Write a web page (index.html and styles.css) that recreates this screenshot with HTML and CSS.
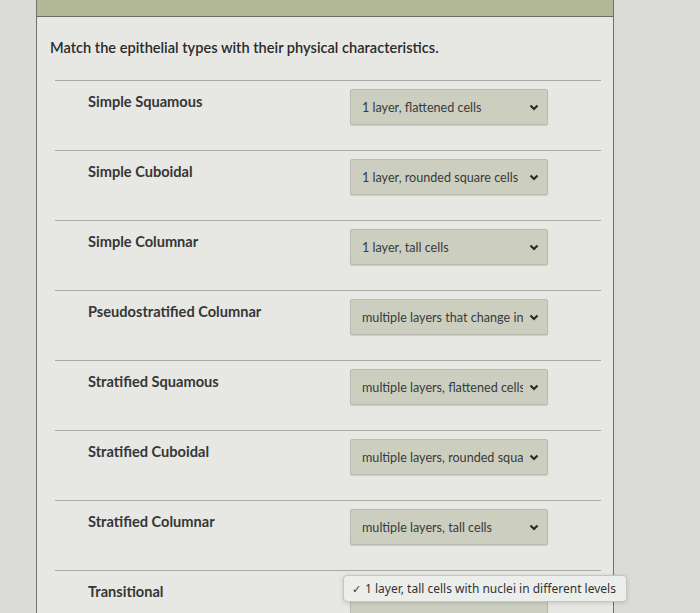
FILE: index.html
```html
<!DOCTYPE html>
<html lang="en">
<head>
    <meta charset="UTF-8">
    <meta name="viewport" content="width=device-width, initial-scale=1.0">
    <title>Matching Question</title>
    <link rel="stylesheet" href="styles.css">
</head>
<body>
    <div class="card">
        <div class="card-top"></div>
        <p class="prompt">Match the epithelial types with their physical characteristics.</p>

        <div class="rows">
            <div class="row">
                <div class="term">Simple Squamous</div>
                <div class="choice">
                    <span class="choice-text">1 layer, flattened cells</span>
                    <svg class="chevron" viewBox="0 0 10 7"><polyline points="1.5,1.5 5,5 8.5,1.5"/></svg>
                </div>
            </div>
            <div class="row">
                <div class="term">Simple Cuboidal</div>
                <div class="choice">
                    <span class="choice-text">1 layer, rounded square cells</span>
                    <svg class="chevron" viewBox="0 0 10 7"><polyline points="1.5,1.5 5,5 8.5,1.5"/></svg>
                </div>
            </div>
            <div class="row">
                <div class="term">Simple Columnar</div>
                <div class="choice">
                    <span class="choice-text">1 layer, tall cells</span>
                    <svg class="chevron" viewBox="0 0 10 7"><polyline points="1.5,1.5 5,5 8.5,1.5"/></svg>
                </div>
            </div>
            <div class="row">
                <div class="term">Pseudostratified Columnar</div>
                <div class="choice">
                    <span class="choice-text">multiple layers that change in shape</span>
                    <svg class="chevron" viewBox="0 0 10 7"><polyline points="1.5,1.5 5,5 8.5,1.5"/></svg>
                </div>
            </div>
            <div class="row">
                <div class="term">Stratified Squamous</div>
                <div class="choice">
                    <span class="choice-text">multiple layers, flattened cells</span>
                    <svg class="chevron" viewBox="0 0 10 7"><polyline points="1.5,1.5 5,5 8.5,1.5"/></svg>
                </div>
            </div>
            <div class="row">
                <div class="term">Stratified Cuboidal</div>
                <div class="choice">
                    <span class="choice-text">multiple layers, rounded square cells</span>
                    <svg class="chevron" viewBox="0 0 10 7"><polyline points="1.5,1.5 5,5 8.5,1.5"/></svg>
                </div>
            </div>
            <div class="row">
                <div class="term">Stratified Columnar</div>
                <div class="choice">
                    <span class="choice-text">multiple layers, tall cells</span>
                    <svg class="chevron" viewBox="0 0 10 7"><polyline points="1.5,1.5 5,5 8.5,1.5"/></svg>
                </div>
            </div>
            <div class="row">
                <div class="term">Transitional</div>
                <div class="choice open">
                    <span class="choice-text"></span>
                    <!-- open dropdown menu -->
                    <div class="menu">
                        <span class="check">&#10003;</span> 1 layer, tall cells with nuclei in different levels
                    </div>
                </div>
            </div>
        </div>
    </div>
</body>
</html>
```

FILE: styles.css
```css
body {
    margin: 0;
    background-color: #dbdcd7;
    font-family: Lato, "Open Sans", sans-serif;
    color: #333;
    height: 613px;
    overflow: hidden;
}
.card {
    margin-left: 36px;
    width: 576px;
    height: 640px;
    background-color: #e7e8e4;
    border-left: 1px solid #70726d;
    border-right: 1px solid #70726d;
}
.card-top {
    height: 16px;
    background-color: #b3b996;
    border-bottom: 1px solid #6a6c62;
}
.prompt {
    margin: 0;
    padding: 21px 0 0 13px;
    font-size: 14.6px;
    font-weight: 600;
    line-height: 20px;
    color: #2b2b2b;
}
.rows {
    margin: 22px 12px 0 18px;
}
.row {
    display: flex;
    align-items: flex-start;
    height: 70px;
    padding-top: 8px;
    box-sizing: border-box;
    border-top: 1px solid #a8aaa4;
}
.term {
    width: 295px;
    padding: 3px 0 0 33px;
    box-sizing: border-box;
    font-size: 14.6px;
    font-weight: 700;
    line-height: 20px;
    color: #363636;
}
.choice {
    position: relative;
    display: flex;
    align-items: center;
    width: 198px;
    height: 36px;
    padding: 0 8px 0 11px;
    box-sizing: border-box;
    background-color: #cccfc0;
    border: 1px solid #b9bbb0;
    border-radius: 2px;
    box-shadow: 0 1px 1px rgba(0, 0, 0, 0.12);
}
.choice-text {
    flex: 1;
    overflow: hidden;
    white-space: nowrap;
    font-size: 12.6px;
    color: #3a3a3a;
}
.chevron {
    width: 10px;
    height: 7px;
    margin-left: 6px;
    fill: none;
    stroke: #2a2a2a;
    stroke-width: 2.2;
}
.menu {
    position: absolute;
    left: -8px;
    top: -5px;
    width: 284px;
    height: 27px;
    box-sizing: border-box;
    padding: 0 8px;
    display: flex;
    align-items: center;
    gap: 4px;
    background-color: #eceeeb;
    border: 1px solid #c4c6c1;
    border-radius: 4px;
    box-shadow: 0 1px 4px rgba(0, 0, 0, 0.15);
    font-family: "Noto Sans", "Open Sans", sans-serif;
    font-size: 12px;
    color: #333;
    white-space: nowrap;
}
.check {
    font-size: 11px;
}
```
